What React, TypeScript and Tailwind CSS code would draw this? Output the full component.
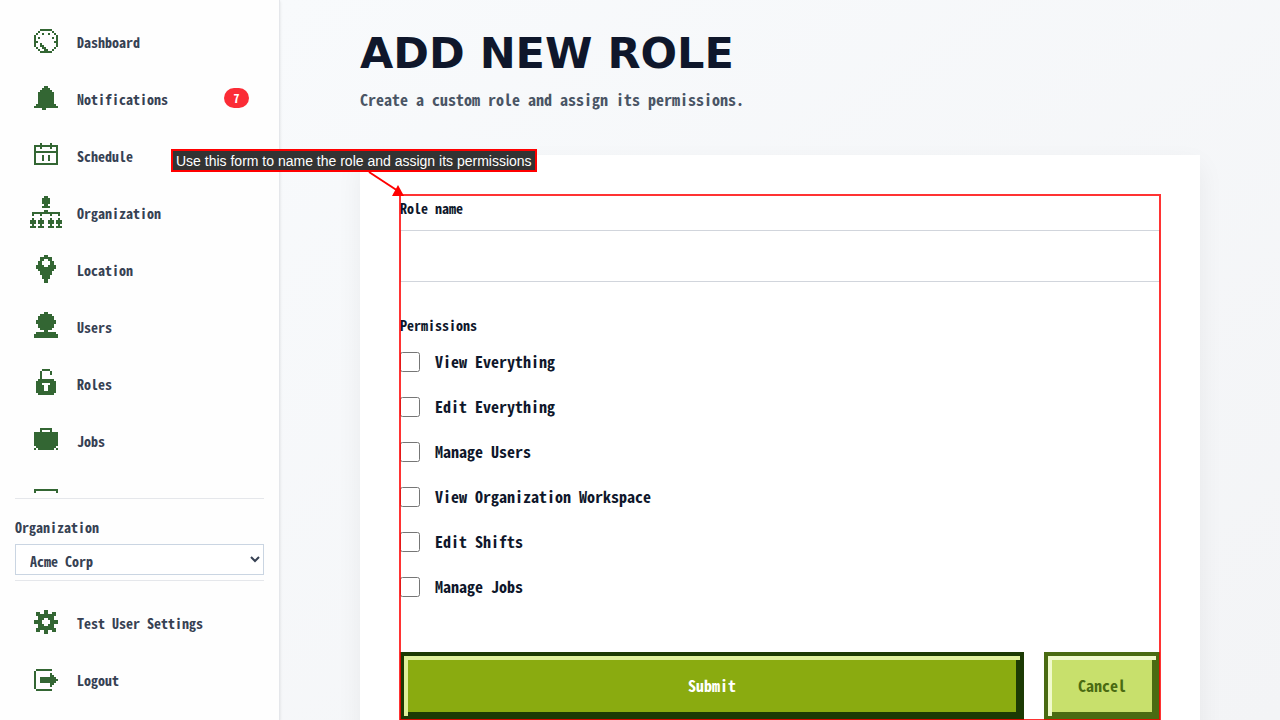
interface Glyph {
  x: number;
  y: number;
  rows: string[];
}

interface NavItem {
  icon: string;
  label?: string;
  badge?: number;
}

// 16x16 pixel icons, x/y is where the bitmap starts inside the grid
const ICONS: Record<string, Glyph> = {
  dashboard: {
    x: 2,
    y: 2,
    rows: [
      "...######...",
      "..#......#..",
      ".#..#..#..#.",
      "#..........#",
      "#.#......#.#",
      "#..........#",
      "##........##",
      "#..#.......#",
      "#..##......#",
      ".#..##....#.",
      "..#..##..#..",
      "...######...",
    ],
  },
  bell: {
    x: 2,
    y: 2,
    rows: [
      ".....##.....",
      "....####....",
      "...######...",
      "..########..",
      "..########..",
      "..########..",
      "..########..",
      "..########..",
      "..########..",
      ".##########.",
      "############",
      "....##......",
    ],
  },
  calendar: {
    x: 2,
    y: 2,
    rows: [
      "...#....#...",
      "############",
      "#..#....#..#",
      "#..........#",
      "############",
      "#..........#",
      "#...#..#...#",
      "#...#..#...#",
      "#...#..#...#",
      "#..........#",
      "############",
    ],
  },
  orgChart: {
    x: 0,
    y: 0,
    rows: [
      ".......##.......",
      "......####......",
      "......####......",
      "......####......",
      ".......##.......",
      "......####......",
      "................",
      ".......##.......",
      ".##############.",
      ".#...#....#...#.",
      "................",
      ".#...#....#...#.",
      "###.###..###.###",
      "###.###..###.###",
      ".#...#....#...#.",
      "###.###..###.###",
    ],
  },
  pin: {
    x: 3,
    y: 1,
    rows: [
      "....##....",
      "..######..",
      "..##..##..",
      ".##....##.",
      ".##....##.",
      "####..####",
      "##########",
      ".########.",
      "..######..",
      "..######..",
      "...####...",
      "...####...",
      "....##....",
      "....##....",
    ],
  },
  user: {
    x: 2,
    y: 1,
    rows: [
      ".....##.....",
      "...######...",
      "..########..",
      "..########..",
      ".##########.",
      ".##########.",
      "..########..",
      "..########..",
      "...######...",
      ".....##.....",
      ".##########.",
      "############",
      "############",
    ],
  },
  lock: {
    x: 3,
    y: 1,
    rows: [
      "...####...",
      "..#....#..",
      "..#....#..",
      "..#.......",
      "..#.......",
      ".########.",
      "##########",
      "###....###",
      "####..####",
      "####..####",
      "####..####",
      "##########",
      ".########.",
    ],
  },
  briefcase: {
    x: 2,
    y: 2,
    rows: [
      "...######...",
      "...#....#...",
      "############",
      "############",
      "############",
      "############",
      "############",
      "############",
      "############",
      ".##########.",
      "#.########.#",
    ],
  },
  board: {
    x: 2,
    y: 4,
    rows: [
      "############",
      "#..........#",
      "#..........#",
      "#..........#",
      "#..........#",
      "############",
    ],
  },
  gear: {
    x: 2,
    y: 2,
    rows: [
      ".....##.....",
      ".##..##..##.",
      ".##########.",
      "..########..",
      "..###..###..",
      "####....####",
      "####....####",
      "..###..###..",
      "..########..",
      ".##########.",
      ".##..##..##.",
      ".....##.....",
    ],
  },
  logout: {
    x: 2,
    y: 3,
    rows: [
      ".########...",
      "#...........",
      "#.......#...",
      "#.......##..",
      "#..########.",
      "#..#########",
      "#..########.",
      "#.......##..",
      "#.......#...",
      "#...........",
      ".########...",
    ],
  },
};

const NAV: NavItem[] = [
  { label: "Dashboard", icon: "dashboard" },
  { label: "Notifications", icon: "bell", badge: 7 },
  { label: "Schedule", icon: "calendar" },
  { label: "Organization", icon: "orgChart" },
  { label: "Location", icon: "pin" },
  { label: "Users", icon: "user" },
  { label: "Roles", icon: "lock" },
  { label: "Jobs", icon: "briefcase" },
  { icon: "board" },
];

const ACCOUNT_NAV: NavItem[] = [
  { label: "Test User Settings", icon: "gear" },
  { label: "Logout", icon: "logout" },
];

const PERMISSIONS = [
  "View Everything",
  "Edit Everything",
  "Manage Users",
  "View Organization Workspace",
  "Edit Shifts",
  "Manage Jobs",
];

function PixelIcon({ name }: { name: string }) {
  const glyph = ICONS[name];
  return (
    <svg
      viewBox="0 0 16 16"
      className="size-8 shrink-0 fill-[#336633]"
      shapeRendering="crispEdges"
      aria-hidden="true"
    >
      {glyph.rows.flatMap((row, r) =>
        [...row].map((cell, c) =>
          cell === "#" ? (
            <rect key={`${r}-${c}`} x={glyph.x + c} y={glyph.y + r} width="1" height="1" />
          ) : null
        )
      )}
    </svg>
  );
}

function NavLink({ item }: { item: NavItem }) {
  return (
    <a
      href="#"
      className="flex h-[52px] shrink-0 items-center gap-[15px] px-[15px] text-sm text-[#364153] hover:bg-gray-50"
    >
      <PixelIcon name={item.icon} />
      {item.label && <span className="flex-1 pt-px whitespace-nowrap">{item.label}</span>}
      {item.badge != null && (
        <span className="flex h-5 w-[25px] items-center justify-center rounded-full bg-[#fb2c36] text-xs text-white">
          {item.badge}
        </span>
      )}
    </a>
  );
}

function Sidebar() {
  return (
    <aside className="relative flex w-[280px] shrink-0 flex-col border-r border-gray-200 bg-[#fefefe] p-[15px] shadow-sm">
      <nav className="mb-[5px] flex min-h-0 flex-1 flex-col gap-[5px] overflow-hidden">
        {NAV.map((item) => (
          <NavLink key={item.icon} item={item} />
        ))}
      </nav>

      {/* Organization switcher */}
      <div className="flex flex-col border-y border-gray-200 pt-[15px] pb-[5px] text-sm text-[#364153]">
        <label htmlFor="organization" className="mb-[3px] leading-[27px]">
          Organization
        </label>
        <select
          id="organization"
          className="h-[31px] w-full border border-[#cad5e2] bg-white pt-[2px] pl-[10px] text-sm"
        >
          <option>Acme Corp</option>
        </select>
      </div>

      <nav className="flex flex-col gap-[5px] pt-[15px]">
        {ACCOUNT_NAV.map((item) => (
          <NavLink key={item.icon} item={item} />
        ))}
      </nav>
    </aside>
  );
}

// Callout and outline that walk the user through the form
function FormHint() {
  return (
    <div className="pointer-events-none absolute -inset-px border-2 border-[#ff0000cc]">
      <svg
        viewBox="0 0 40 28"
        className="absolute -top-[26px] -left-[34px] h-7 w-10"
        aria-hidden="true"
      >
        <path d="M2 2L31 21" stroke="#ff0000" strokeWidth="2" />
        <path d="M31 15L37 26H25Z" fill="#ff0000" />
      </svg>
      <div className="absolute -top-[47px] -left-[230px] border-2 border-[#ff0000] bg-[#333333] px-[3px] pt-[2px] font-['Liberation_Sans',Arial,sans-serif] text-sm leading-[17px] font-normal whitespace-nowrap text-white">
        Use this form to name the role and assign its permissions
      </div>
    </div>
  );
}

function RoleForm() {
  return (
    <form className="relative text-[#0f172b]" onSubmit={(e) => e.preventDefault()}>
      <label htmlFor="role-name" className="mb-[9px] block text-sm leading-[26px]">
        Role name
      </label>
      <input
        id="role-name"
        type="text"
        className="block h-[52px] w-full border border-gray-300 bg-white px-[15px] text-base"
      />

      <fieldset className="mt-[30px]">
        <legend className="mb-[11px] text-sm leading-[26px]">Permissions</legend>
        <div className="flex flex-col gap-5">
          {PERMISSIONS.map((permission) => (
            <label key={permission} className="flex items-center gap-[15px] text-base leading-[25px]">
              <input type="checkbox" className="size-5" />
              {permission}
            </label>
          ))}
        </div>
      </fieldset>

      <div className="mt-[53px] flex gap-5">
        <button
          type="submit"
          className="h-[68px] flex-1 border-4 border-[#1c3a04] bg-[#8aab10] pb-[2px] text-base text-white shadow-[inset_4px_4px_0_#dff09c,inset_-4px_-4px_0_#1c3a04]"
        >
          Submit
        </button>
        <button
          type="button"
          className="h-[68px] border-4 border-[#4a6b12] bg-[#c8e06c] px-[30px] pb-[2px] text-base text-[#4a6b12] shadow-[inset_4px_4px_0_#f0facc,inset_-4px_-4px_0_#4a6b12]"
        >
          Cancel
        </button>
      </div>
      <FormHint />
    </form>
  );
}

export default function App() {
  return (
    <div className="flex h-screen overflow-hidden font-['Noto_Sans_Mono_CJK_SC','Liberation_Mono',monospace] font-bold">
      <Sidebar />
      <main className="min-w-0 flex-1 bg-linear-to-br from-[#f8fafc] to-[#f3f4f6] px-20 pt-[26px]">
        <h1 className="font-['DejaVu_Sans',sans-serif] text-[43px] leading-[54px] font-bold whitespace-nowrap text-[#0f172b]">
          ADD NEW ROLE
        </h1>
        <p className="mt-[7px] text-base leading-6 text-[#4a5565]">
          Create a custom role and assign its permissions.
        </p>
        <section className="mt-11 bg-white p-10 shadow-[0_10px_25px_rgba(0,0,0,0.06)]">
          <RoleForm />
        </section>
      </main>
    </div>
  );
}
